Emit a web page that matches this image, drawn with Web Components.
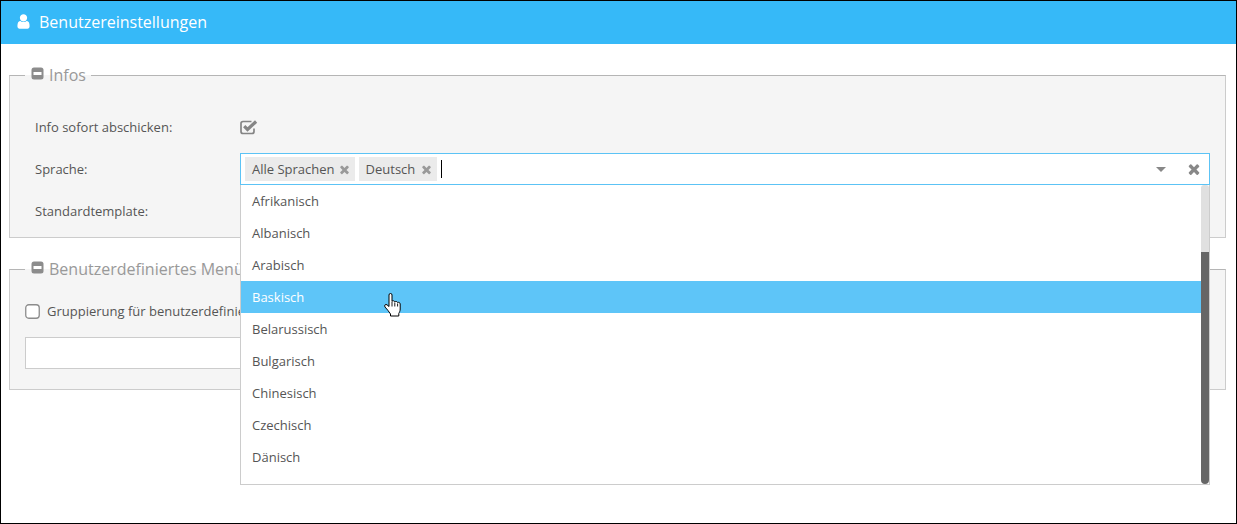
<!DOCTYPE html>
<html lang="de">
<head>
<meta charset="utf-8">
<title>Benutzereinstellungen</title>
<style>
  html, body { margin: 0; background: #fff; }
  body { font: 13px/18px "Open Sans", "Liberation Sans", sans-serif; color: #555; }
</style>
</head>
<body>

<settings-page>
  <panel-header title="Benutzereinstellungen"></panel-header>

  <field-group legend="Infos">
    <form-row label="Info sofort abschicken:">
      <check-box checked></check-box>
    </form-row>
    <form-row label="Sprache:">
      <tag-select open>
        <select-tag>Alle Sprachen</select-tag>
        <select-tag>Deutsch</select-tag>
        <select-option slot="options">Afrikanisch</select-option>
        <select-option slot="options">Albanisch</select-option>
        <select-option slot="options">Arabisch</select-option>
        <select-option slot="options" active>Baskisch</select-option>
        <select-option slot="options">Belarussisch</select-option>
        <select-option slot="options">Bulgarisch</select-option>
        <select-option slot="options">Chinesisch</select-option>
        <select-option slot="options">Czechisch</select-option>
        <select-option slot="options">Dänisch</select-option>
      </tag-select>
    </form-row>
    <form-row label="Standardtemplate:"></form-row>
  </field-group>

  <field-group legend="Benutzerdefiniertes Menü" compact>
    <check-box label="Gruppierung für benutzerdefinie"></check-box>
    <text-box></text-box>
  </field-group>
</settings-page>

<script>
// icons, 1792 grid
const ICON_USER = 'M1536 1399q0 109-62.5 187t-150.5 78h-854q-88 0-150.5-78t-62.5-187q0-85 8.5-160.5t31.5-152 58.5-131 94-89 134.5-34.5q131 128 313 128t313-128q76 0 134.5 34.5t94 89 58.5 131 31.5 152 8.5 160.5zm-256-887q0 159-112.5 271.5t-271.5 112.5-271.5-112.5-112.5-271.5 112.5-271.5 271.5-112.5 271.5 112.5 112.5 271.5z';
const ICON_TIMES = 'M1490 1322q0 40-28 68l-136 136q-28 28-68 28t-68-28l-294-294-294 294q-28 28-68 28t-68-28l-136-136q-28-28-28-68t28-68l294-294-294-294q-28-28-28-68t28-68l136-136q28-28 68-28t68 28l294 294 294-294q28-28 68-28t68 28l136 136q28 28 28 68t-28 68l-294 294 294 294q28 28 28 68z';

/////////////////////// 
////// Page shell /////
//////////////////////

class SettingsPage extends HTMLElement {
  constructor() {
    super();
    this.attachShadow({ mode: 'open' });
    this.shadowRoot.innerHTML = `
      <style>
        :host {
          display: block;
          box-sizing: border-box;
          width: 1237px;
          height: 524px;
          border: 1px solid #000;
          overflow: hidden;
        }
        main { padding: 22px 10px 0 8px; display: flex; flex-direction: column; gap: 22px; }
      </style>
      <slot name="head"></slot>
      <main><slot></slot></main>
    `;
    const head = this.querySelector('panel-header');
    if (head) head.slot = 'head';
  }
}

class PanelHeader extends HTMLElement {
  constructor() {
    super();
    this.attachShadow({ mode: 'open' });
    this.shadowRoot.innerHTML = `
      <style>
        :host {
          display: flex;
          align-items: center;
          gap: 7px;
          box-sizing: border-box;
          height: 43px;
          padding: 0 0 2px 14px;
          background: #36b9f8;
          color: #fff;
          font-size: 16px;
        }
        svg { width: 17px; height: 17px; fill: #fff; }
      </style>
      <svg viewBox="0 0 1792 1792"><path d="${ICON_USER}"/></svg>
      <span></span>
    `;
    this.shadowRoot.querySelector('span').textContent = this.getAttribute('title');
    this.removeAttribute('title');
  }
}

/////////////////////// 
////// Fieldsets //////
//////////////////////

class FieldGroup extends HTMLElement {
  constructor() {
    super();
    this.attachShadow({ mode: 'open' });
    this.shadowRoot.innerHTML = `
      <style>
        :host { display: block; }
        fieldset {
          margin: 0;
          padding: 22px 15px 0 15px;
          height: 172px;
          box-sizing: border-box;
          border: 1px solid #ccc;
          border-top-color: #b5b5b5;
          background: #f5f5f5;
          display: block;
        }
        :host([compact]) fieldset { padding-top: 24px; height: 130px; }
        .body { padding-left: 10px; }
        :host([compact]) .body { padding-left: 0; }
        legend {
          margin-left: 0;
          padding: 0 5px 0 6px;
          font-size: 16px;
          line-height: 18px;
          color: #999;
          display: flex;
          align-items: center;
          gap: 5px;
        }
        svg { width: 13px; height: 13px; margin-top: -3px; }
      </style>
      <fieldset>
        <legend>
          <svg viewBox="0 0 13 13">
            <rect x=".5" y=".5" width="12" height="12" rx="2.5" fill="#8c8c8c"/>
            <rect x="2.5" y="5" width="8" height="3" fill="#fff"/>
          </svg>
          <span></span>
        </legend>
        <div class="body"><slot></slot></div>
      </fieldset>
    `;
    this.shadowRoot.querySelector('span').textContent = this.getAttribute('legend');
  }
}

class FormRow extends HTMLElement {
  constructor() {
    super();
    this.attachShadow({ mode: 'open' });
    this.shadowRoot.innerHTML = `
      <style>
        :host {
          display: grid;
          grid-template-columns: 205px 1fr;
          align-items: center;
          height: 42px;
        }
        label { color: #555; }
      </style>
      <label></label>
      <div><slot></slot></div>
    `;
    this.shadowRoot.querySelector('label').textContent = this.getAttribute('label');
  }
}

/////////////////////// 
//////// Inputs ///////
//////////////////////

class CheckBox extends HTMLElement {
  constructor() {
    super();
    this.attachShadow({ mode: 'open' });
    const checked = this.hasAttribute('checked');
    this.shadowRoot.innerHTML = `
      <style>
        :host { display: flex; align-items: center; gap: 7px; height: 18px; }
        svg { display: block; flex: none; }
      </style>
      ${checked ? `
      <svg width="18" height="15" viewBox="0 0 18 15" fill="none" stroke="#858585">
        <path d="M14 8.5v3a2 2 0 0 1-2 2H3a2 2 0 0 1-2-2V3.5a2 2 0 0 1 2-2h8.5" stroke-width="1.7"/>
        <path d="M4.2 6.2l3.3 3.3 8.6-8" stroke-width="3.2"/>
      </svg>` : `
      <svg width="15" height="15" viewBox="0 0 15 15">
        <rect x=".75" y=".75" width="13.5" height="13.5" rx="3" fill="#fff" stroke="#8c8c8c" stroke-width="1.3"/>
      </svg>`}
      <span></span>
    `;
    this.shadowRoot.querySelector('span').textContent = this.getAttribute('label') || '';
  }
}

class TextBox extends HTMLElement {
  constructor() {
    super();
    this.attachShadow({ mode: 'open' });
    this.shadowRoot.innerHTML = `
      <style>
        :host {
          display: block;
          box-sizing: border-box;
          margin-top: 17px;
          height: 32px;
          border: 1px solid #ccc;
          background: #fff;
        }
      </style>
    `;
  }
}

/////////////////////// 
////// Tag select /////
//////////////////////

class TagSelect extends HTMLElement {
  constructor() {
    super();
    this.attachShadow({ mode: 'open' });
    this.shadowRoot.innerHTML = `
      <style>
        :host { display: block; position: relative; height: 32px; }
        .control {
          box-sizing: border-box;
          height: 32px;
          border: 1px solid #5cc3f5;
          background: #fff;
          display: flex;
          align-items: center;
          padding-left: 4px;
          gap: 4px;
        }
        .caret { width: 1px; height: 18px; background: #000; }
        .tools { margin-left: auto; display: flex; align-items: center; }
        .arrow {
          width: 0; height: 0;
          border: 5px solid transparent;
          border-top: 5px solid #888;
          border-bottom: 0;
          margin-right: 20px;
        }
        .clear { width: 16px; height: 16px; fill: #888; margin-right: 7px; display: block; }
        .menu {
          position: absolute;
          z-index: 5;
          left: 0;
          right: 0;
          top: 32px;
          box-sizing: border-box;
          height: 300px;
          background: #fff;
          border: 1px solid #ccc;
          border-top: 0;
          display: flex;
        }
        .list { flex: 1; min-width: 0; }
        .scroll { width: 8px; display: flex; flex-direction: column; }
        .scroll i { display: block; }
        .scroll .up { height: 67px; background: #e0e0e0; border-radius: 3px 3px 0 0; }
        .scroll .down { flex: 1; background: #666; border-radius: 0 0 4px 4px; }
      </style>
      <div class="control">
        <slot></slot>
        <span class="caret"></span>
        <div class="tools">
          <span class="arrow"></span>
          <svg class="clear" viewBox="0 0 1792 1792"><path d="${ICON_TIMES}"/></svg>
        </div>
      </div>
      <div class="menu">
        <div class="list"><slot name="options"></slot></div>
        <div class="scroll"><i class="up"></i><i class="down"></i></div>
      </div>
    `;
  }
}

class SelectTag extends HTMLElement {
  constructor() {
    super();
    this.attachShadow({ mode: 'open' });
    this.shadowRoot.innerHTML = `
      <style>
        :host {
          display: inline-flex;
          align-items: center;
          box-sizing: border-box;
          min-width: 78px;
          height: 24px;
          padding: 0 4px 0 7px;
          gap: 3px;
          background: #ebebeb;
          color: #555;
        }
        svg { width: 13px; height: 13px; fill: #999; margin-left: auto; }
      </style>
      <slot></slot>
      <svg viewBox="0 0 1792 1792"><path d="${ICON_TIMES}"/></svg>
    `;
  }
}

class SelectOption extends HTMLElement {
  constructor() {
    super();
    this.attachShadow({ mode: 'open' });
    this.shadowRoot.innerHTML = `
      <style>
        :host {
          display: flex;
          align-items: center;
          position: relative;
          height: 32px;
          padding-left: 11px;
          color: #555;
        }
        :host([active]) { background: #5ec5f8; color: #fff; }
        svg { position: absolute; left: 143px; top: 12px; }
      </style>
      <slot></slot>
      ${this.hasAttribute('active') ? `
      <svg width="19" height="24" viewBox="0 0 19 24">
        <path d="M5 2a1.5 1.5 0 0 1 3 0v6.2c.9-.8 2.4-.5 2.8.6.9-.7 2.4-.4 2.8.7 1-.5 2.6.1 2.6 1.5v5c0 2-.8 3.2-1.4 4.5v2.5H6.5v-2C5 18.5 2.8 16 1 14c-1.2-1.5.6-3.3 2-2.2l2 1.7z" fill="#fff" stroke="#000" stroke-width="1" stroke-linejoin="round"/>
        <path d="M8 8.5v5M10.8 9.5v4M13.6 10.5v3" stroke="#000" stroke-width=".9" fill="none"/>
      </svg>` : ''}
    `;
  }
}

window.customElements.define('settings-page', SettingsPage);
window.customElements.define('panel-header', PanelHeader);
window.customElements.define('field-group', FieldGroup);
window.customElements.define('form-row', FormRow);
window.customElements.define('check-box', CheckBox);
window.customElements.define('text-box', TextBox);
window.customElements.define('tag-select', TagSelect);
window.customElements.define('select-tag', SelectTag);
window.customElements.define('select-option', SelectOption);
</script>
</body>
</html>
